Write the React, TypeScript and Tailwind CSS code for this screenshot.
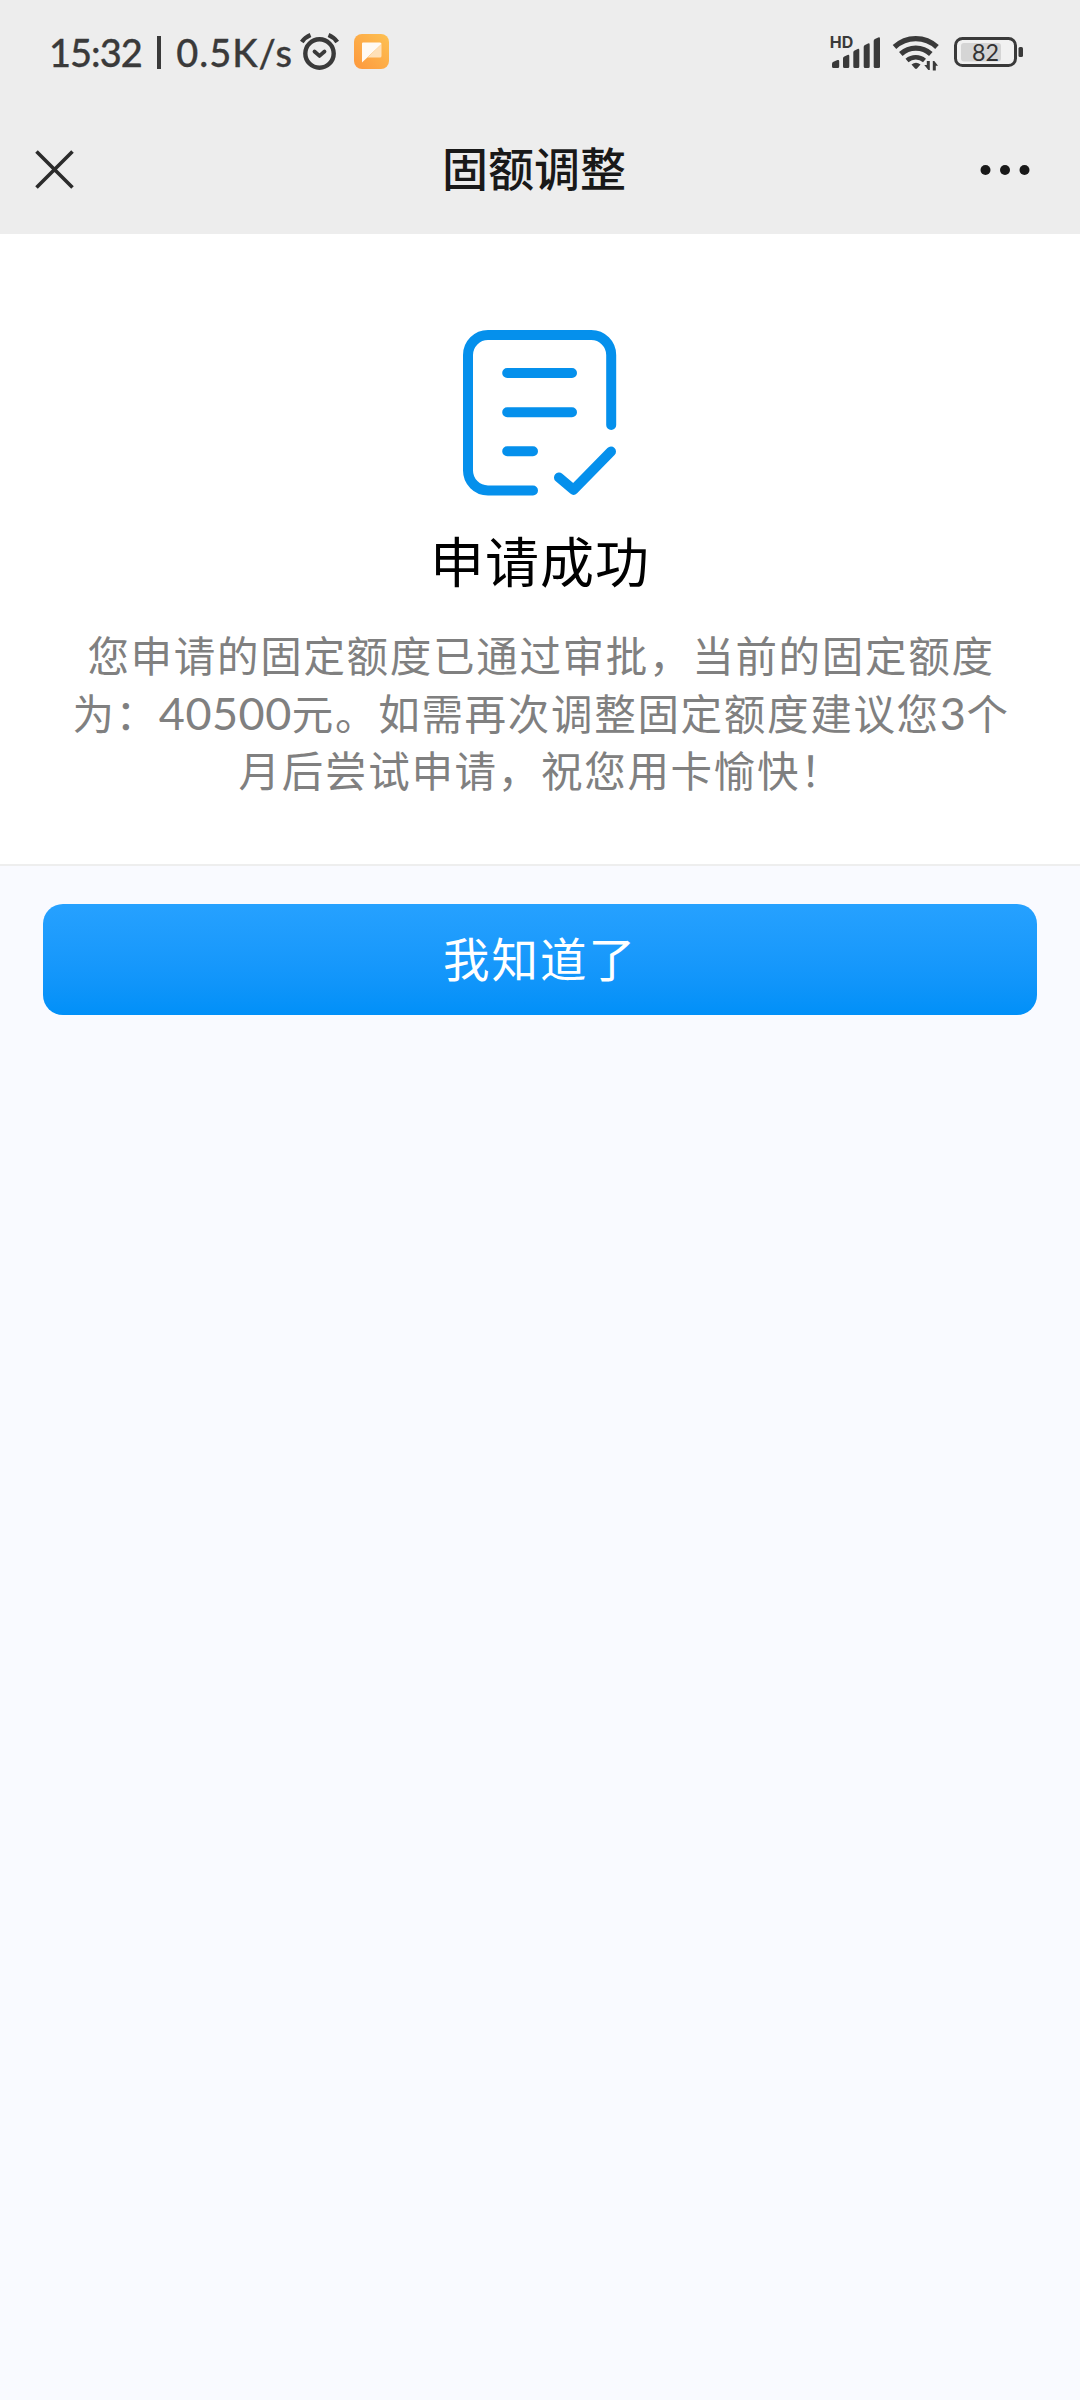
const resultLines = ["您申请的固定额度已通过审批，当前的固定额度", "月后尝试申请，祝您用卡愉快！"];

function AlarmIcon() {
  return (
    <svg viewBox="300 32 40 40" className="h-10 w-10" fill="none" stroke="#3a3a3a" strokeLinecap="round" strokeLinejoin="round">
      <circle cx="319.5" cy="53.5" r="14.2" strokeWidth="4.4" />
      <path d="M314.5 51.5l5 4.4 5-4.4" strokeWidth="3.8" />
      <path d="M301.8 42q3.2-4.800 8.700-7M337.200 42q-3.200-4.800-8.700-7" strokeWidth="4.4" strokeLinecap="butt" />
    </svg>
  );
}

function NoteAppIcon() {
  return (
    <svg viewBox="0 0 35 35" className="h-[35px] w-[35px]">
      <defs>
        <linearGradient id="note-bg" x1="0" y1="1" x2="1" y2="0">
          <stop offset="0" stopColor="#fd983d" />
          <stop offset="1" stopColor="#fdc152" />
        </linearGradient>
      </defs>
      <rect width="35" height="35" rx="8" fill="url(#note-bg)" />
      <path d="M9 8.5h17a1.5 1.5 0 0 1 1.5 1.5L8 28.5V9.5a1 1 0 0 1 1-1z" fill="#fffaf3" />
      <path d="M27.5 10v12a1.5 1.5 0 0 1-1.5 1.5H13.5z" fill="#ffe1b8" />
    </svg>
  );
}

function SignalIcon() {
  return (
    <svg viewBox="830 34 52 36" className="h-9 w-[52px]" fill="#3a3a3a">
      <path d="M832 66.500v-2.500q0-1.600 1.500-2.200l4-1.700q1.700-.6 1.700 1.200v5.200q0 1.500-1.500 1.500h-4.200q-1.500 0-1.500-1.500z" />
      <path d="M843 66.500v-8q0-1.500 1.300-2.100l3.200-1.500q1.800-.7 1.800 1.200v10.400q0 1.500-1.500 1.500h-3.300q-1.500 0-1.500-1.500z" />
      <path d="M853.300 66.500v-14q0-1.500 1.300-2.100l3-1.400q1.700-.7 1.700 1.200v16.300q0 1.500-1.500 1.500h-3q-1.500 0-1.500-1.500z" />
      <path d="M863.700 66.500V47q0-1.500 1.300-2.100l3-1.400q1.700-.7 1.700 1.200v21.800q0 1.500-1.500 1.500h-3q-1.500 0-1.500-1.500z" />
      <path d="M873.700 66.500V41q0-1.500 1.300-2.100l3.200-1.400q1.800-.7 1.800 1.200v27.800q0 1.500-1.500 1.500h-3.300q-1.500 0-1.500-1.500z" />
      <text x="829.8" y="48.2" fontSize="15.5" fontWeight="700" textLength="23.5" lengthAdjust="spacingAndGlyphs" fontFamily="Inter, sans-serif">
        HD
      </text>
    </svg>
  );
}

function WifiIcon() {
  return (
    <svg viewBox="890 34 50 38" className="h-[38px] w-[50px]" fill="none" stroke="#3a3a3a" strokeWidth="5.2">
      <path d="M894.5 47a31 31 0 0 1 42.500 0" />
      <path d="M900.8 54a22 22 0 0 1 30 0" />
      <path d="M907 60.5a13.500 13.500 0 0 1 17.500 0" strokeWidth="4.6" />
      <path d="M911.5 64.5q4.500-3.700 9 0l-3.500 4q-1 .9-2 0z" fill="#3a3a3a" stroke="none" />
      <path d="M929.8 61v9h-1.500l-4-5h2.500V61zM932.800 70.500V61h1.500l3.700 4.800h-2.200v4.700z" fill="#3a3a3a" stroke="none" />
    </svg>
  );
}

function BatteryIcon() {
  return (
    <svg viewBox="952 34 74 36" className="h-9 w-[74px]">
      <rect x="955.5" y="38.5" width="60" height="27" rx="7" fill="#f1f1f1" stroke="#3a3a3a" strokeWidth="3" />
      <rect x="961" y="43" width="40" height="18.5" rx="3" fill="#d5d5d5" />
      <rect x="1018.5" y="47" width="4.5" height="10" rx="1.5" fill="#3a3a3a" />
      <text x="985.5" y="60.6" textAnchor="middle" fontSize="23" fill="#333333" textLength="27" lengthAdjust="spacingAndGlyphs" fontFamily="Lato, sans-serif">
        82
      </text>
    </svg>
  );
}

function StatusBar() {
  return (
    <div className="flex h-[105px] items-start pt-8 text-[#3a3a3a]">
      <div className="ml-[49px] flex h-10 w-[244px] items-center justify-between whitespace-nowrap font-['Lato'] text-[38px] font-medium leading-10 [-webkit-text-stroke:0.3px_#3a3a3a]">
        <span className="tracking-[-1px]">15:32</span>
        <span className="h-[33px] w-[3.5px] shrink-0 bg-[#3a3a3a]" />
        <span className="tracking-[1px]">0.5K/s</span>
      </div>
      <div className="ml-[7px] flex h-10 items-center gap-[13.5px]">
        <AlarmIcon />
        <div className="-mt-0.5">
          <NoteAppIcon />
        </div>
      </div>
      <div className="ml-auto mr-[54px] flex items-start pt-0.5">
        <SignalIcon />
        <div className="ml-2">
          <WifiIcon />
        </div>
        <div className="ml-3">
          <BatteryIcon />
        </div>
      </div>
    </div>
  );
}

function TitleBar() {
  return (
    <header className="flex h-[129px] items-center justify-between pl-[35px] pr-[50px]">
      <button type="button" aria-label="关闭" className="flex w-[53px]">
        <svg viewBox="0 0 39 39" className="h-[39px] w-[39px]" fill="none" stroke="#2b2b2b" strokeWidth="3.6">
          <path d="M1.5 1.5l36 36M37.500 1.500l-36 36" />
        </svg>
      </button>
      <h1 className="pb-[7px] text-[46px] font-medium leading-none text-[#191919]">固额调整</h1>
      <button type="button" aria-label="更多">
        <svg viewBox="0 0 50 12" className="h-3 w-[50px]" fill="#191919">
          <circle cx="5.5" cy="6" r="5" />
          <circle cx="25" cy="6" r="5" />
          <circle cx="44.5" cy="6" r="5" />
        </svg>
      </button>
    </header>
  );
}

function SuccessIcon() {
  return (
    <svg viewBox="463 330 154 166" className="h-[166px] w-[154px]" fill="none" stroke="#0590ec" strokeWidth="10" strokeLinecap="round" strokeLinejoin="round">
      <path d="M611.2 425V355a20 20 0 0 0-20-20H488a20 20 0 0 0-20 20V470.500a20 20 0 0 0 20 20H533" />
      <path d="M507.2 373H572M507.200 412.200H572M507.200 451.200H533" />
      <path d="M559 477.5L573.500 489.800L611 451.500" />
    </svg>
  );
}

export default function App() {
  return (
    <div className="flex min-h-[2400px] w-[1080px] flex-col bg-[#f9faff] font-['Noto_Sans_CJK_SC',sans-serif]">
      <div className="bg-[#ededed]">
        <StatusBar />
        <TitleBar />
      </div>
      <main>
        <section className="flex h-[632px] flex-col items-center border-b-2 border-[#eeeeee] bg-white pt-24">
          <SuccessIcon />
          <h2 className="mt-8 text-[54px] leading-[64px] tracking-[1px] text-black">申请成功</h2>
          <div className="mt-[34px] flex flex-col items-center whitespace-nowrap pl-0.5 text-[41.5px] leading-[57.5px] tracking-[1.7px] text-[#808080]">
            <p>{resultLines[0]}</p>
            <p>
              为：<span className="font-['Lato'] text-[45px] leading-none tracking-[0.5px]">40500</span>元。如需再次调整固定额度建议您
              <span className="font-['Lato'] text-[45px] leading-none tracking-[0.5px]">3</span>个
            </p>
            <p>{resultLines[1]}</p>
          </div>
        </section>
        <div className="px-[43px] pt-[38px]">
          <button
            type="button"
            className="flex h-[111px] w-full items-center justify-center rounded-[20px] bg-linear-to-b from-[#26a1ff] to-[#0190f8] pb-1.5 text-[46.5px] tracking-[2px] text-white"
          >
            我知道了
          </button>
        </div>
      </main>
    </div>
  );
}
